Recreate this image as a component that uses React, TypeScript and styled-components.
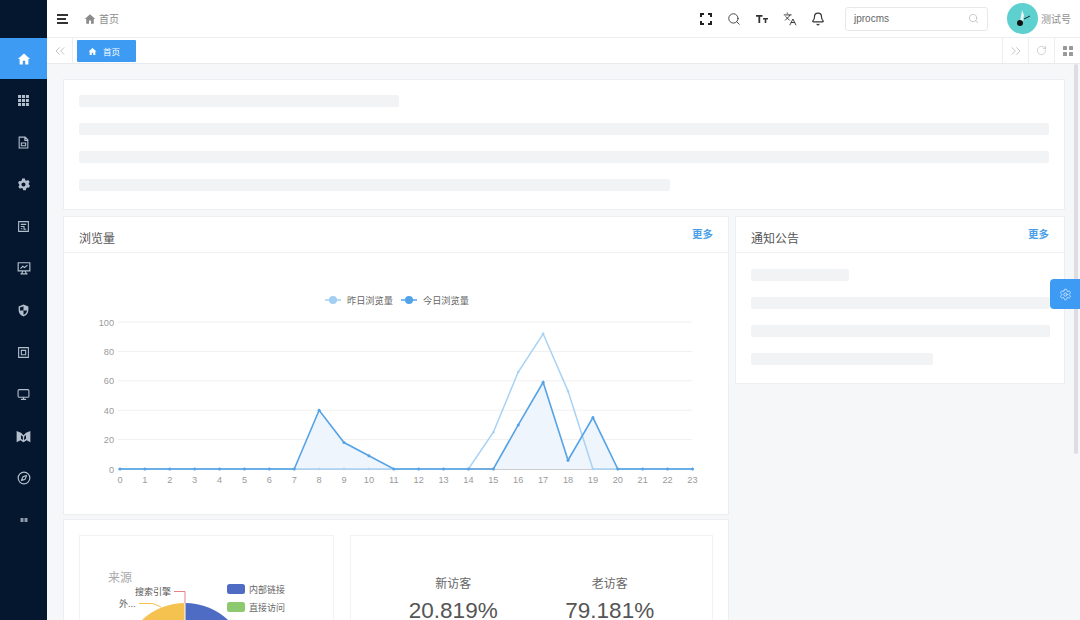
import styled, { createGlobalStyle } from 'styled-components';
import {
  Bell,
  ChevronsLeft,
  ChevronsRight,
  Compass,
  Languages,
  Monitor,
  RotateCw,
  Search,
  Settings,
} from 'lucide-react';

const GlobalStyle = createGlobalStyle`
  html, body {
    margin: 0;
    height: 100%;
    overflow: hidden;
    background: #f5f7f9;
    font-family: "Liberation Sans", "Noto Sans CJK SC", sans-serif;
  }
`;

const Page = styled.div`
  position: relative;
  display: flex;
  width: 1080px;
  height: 620px;
  overflow: hidden;
`;

const Sidebar = styled.nav`
  flex: 0 0 47px;
  padding-top: 38px;
  background: #04172e;
`;

const SideItem = styled.div<{ $active?: boolean; $dim?: boolean }>`
  display: flex;
  align-items: center;
  justify-content: center;
  height: ${(p) => (p.$active ? 41 : 42)}px;
  color: ${(p) => (p.$active ? '#fff' : p.$dim ? '#8f9bab' : '#b4bfcd')};
  background: ${(p) => (p.$active ? '#3e9bf4' : 'transparent')};
`;

const Main = styled.div`
  flex: 1;
  display: flex;
  flex-direction: column;
  min-width: 0;
`;

const Header = styled.header`
  flex: 0 0 38px;
  box-sizing: border-box;
  display: flex;
  align-items: center;
  padding: 0 9px 0 10px;
  background: #fff;
  border-bottom: 1px solid #eceef1;
`;

const Crumb = styled.div`
  display: flex;
  align-items: center;
  gap: 3px;
  margin-left: 16px;
  font-size: 10px;
  color: #8b8b8b;
`;

const HeadIcons = styled.div`
  display: flex;
  align-items: center;
  gap: 14px;
  margin-left: auto;
  color: #333;
`;

const SearchBox = styled.div`
  box-sizing: border-box;
  display: flex;
  align-items: center;
  justify-content: space-between;
  width: 143px;
  height: 24px;
  margin-left: 20px;
  padding: 0 8px;
  border: 1px solid #e6e8eb;
  border-radius: 3px;
  font-size: 10px;
  color: #666;
`;

const Avatar = styled.div`
  display: flex;
  align-items: center;
  justify-content: center;
  width: 31px;
  height: 31px;
  margin-left: 19px;
  border-radius: 50%;
  background: #5dd0cf;
`;

const UserName = styled.span`
  margin-left: 3px;
  font-size: 10px;
  color: #8f8f8f;
`;

const TabBar = styled.div`
  flex: 0 0 26px;
  box-sizing: border-box;
  display: flex;
  align-items: stretch;
  background: #fff;
  border-bottom: 1px solid #e8eaed;
`;

const TabButton = styled.div<{ $side: 'left' | 'right' }>`
  flex: 0 0 26px;
  box-sizing: border-box;
  display: flex;
  align-items: center;
  justify-content: center;
  color: #b5b5b5;
  ${(p) => (p.$side === 'left' ? 'border-right' : 'border-left')}: 1px solid #eceef1;
`;

const Tab = styled.div`
  display: flex;
  align-items: center;
  gap: 6px;
  width: 59px;
  height: 22px;
  box-sizing: border-box;
  margin: 2px auto 0 4px;
  padding-left: 11px;
  border-radius: 1px;
  background: #3e9bf4;
  color: #fff;
  font-size: 8.5px;
`;

const Content = styled.main`
  flex: 1;
  display: grid;
  grid-template-columns: 666px 330px;
  grid-template-rows: 131px 299px auto;
  column-gap: 6px;
  padding: 15px 15px 0 16px;
  overflow: hidden;
`;

const Card = styled.section`
  box-sizing: border-box;
  background: #fff;
  border: 1px solid #eceef2;
`;

const TopCard = styled(Card)`
  grid-column: 1 / 3;
  display: flex;
  flex-direction: column;
  gap: 16px;
  height: 131px;
  margin-bottom: 6px;
  padding: 15px;
`;

const Bar = styled.div<{ $width: string }>`
  width: ${(p) => p.$width};
  height: 12px;
  border-radius: 2px;
  background: #f2f3f5;
`;

const ChartCard = styled(Card)`
  height: 299px;
  margin-top: 6px;
`;

const NoticeCard = styled(Card)`
  height: 168px;
  margin-top: 6px;
`;

const CardHead = styled.div`
  box-sizing: border-box;
  display: flex;
  justify-content: space-between;
  height: 36px;
  padding: 0 15px;
  border-bottom: 1px solid #f0f1f4;
`;

const CardTitle = styled.span`
  padding-top: 14px;
  font-size: 12px;
  line-height: 17px;
  color: #555;
`;

const More = styled.a`
  padding-top: 10px;
  font-size: 10.5px;
  font-weight: 700;
  line-height: 15px;
  color: #4a9fe8;
`;

const NoticeBody = styled.div`
  display: flex;
  flex-direction: column;
  gap: 16px;
  padding: 16px 14px 0 15px;
`;

const Svg = styled.svg`
  display: block;
  font-family: "Liberation Sans", "Noto Sans CJK SC", sans-serif;
`;

const BottomCard = styled(Card)`
  grid-column: 1;
  display: grid;
  grid-template-columns: 255px 363px;
  column-gap: 16px;
  height: 130px;
  margin-top: 10px;
  padding: 15px 15px 0;
  border-bottom: 0;
`;

const Panel = styled.div`
  height: 100px;
  background: #fff;
  border: 1px solid #f1f2f5;
  box-sizing: border-box;
  overflow: hidden;
`;

const VisitorPanel = styled(Panel)`
  display: grid;
  grid-template-columns: 1fr 1fr;
  padding: 40px 24px 0;
  text-align: center;
`;

const VisitorLabel = styled.div`
  font-size: 12px;
  line-height: 17px;
  color: #666;
`;

const VisitorValue = styled.div`
  margin-top: 5px;
  font-size: 22.5px;
  line-height: 26px;
  color: #555;
`;

const FloatButton = styled.div`
  position: absolute;
  top: 279px;
  right: 0;
  display: flex;
  align-items: center;
  justify-content: center;
  width: 30px;
  height: 30px;
  border-radius: 4px 0 0 4px;
  background: #3e9bf4;
  color: #dcecff;
`;

const ScrollThumb = styled.div`
  position: absolute;
  top: 64px;
  right: 2px;
  width: 4px;
  height: 390px;
  border-radius: 2px;
  background: #dcdee2;
`;

function HomeIcon({ size = 12 }: { size?: number }): JSX.Element {
  return (
    <svg width={size} height={size} viewBox="0 0 24 24" fill="currentColor">
      <path d="M12 2.5 1.5 12h3v9.5h5.5V15h4v6.5h5.5V12h3z" />
    </svg>
  );
}

function Glyph({ d, fill, size = 13 }: { d: string; fill?: boolean; size?: number }): JSX.Element {
  return (
    <svg
      width={size}
      height={size}
      viewBox="0 0 24 24"
      fill={fill ? 'currentColor' : 'none'}
      stroke={fill ? 'none' : 'currentColor'}
      strokeWidth="2"
      fillRule="evenodd"
    >
      <path d={d} />
    </svg>
  );
}

const sideIcons = [
  <Glyph fill d="M2 2h5.5v5.5H2zM9.2 2h5.6v5.5H9.2zM16.5 2H22v5.500h-5.5zM2 9.200h5.500v5.600H2zM9.200 9.200h5.600v5.600H9.200zM16.500 9.200H22v5.600h-5.500zM2 16.500h5.500V22H2zM9.200 16.500h5.600V22H9.200zM16.500 16.500H22V22h-5.500z" />,
  <Glyph d="M4 2h11l5 5v15H4zM14.500 2.500V8H20M8 13h8v5H8z" />,
  <Glyph fill d="M9.500 1h5l.7 3 2.600 1.100 2.700-1.500 3 3.600-1.900 2.400.4 2.800 2 1.600-2 4-3-.6-2 2-.6 3h-5l-.7-3-2.600-1.100-2.700 1.500-3-3.600 1.900-2.400-.4-2.800-2-1.600 2-4 3 .6 2-2zM12 8.200a3.800 3.800 0 1 0 0 7.600 3.800 3.800 0 0 0 0-7.600z" />,
  <Glyph d="M3 3h18v18H3zM7 8h10M7 12h6v5h4M7 16h3" />,
  <Glyph size={14} d="M2 3h20v14H2zM8 22l2-5M16 22l-2-5M6 22h12M6 13l4-4 3 2 5-4" />,
  <Glyph fill d="M12 1 3 4.500v7C3 17 7 21.500 12 23c5-1.500 9-6 9-11.500v-7zM12 4v8H5.500v-.5-5zM12 12h6.500c-.5 3.700-3 6.800-6.500 8z" />,
  <Glyph d="M3 3h18v18H3zM8 8h8v8H8z" />,
  <Monitor size={13} />,
  <Glyph fill size={15} d="M1 3l7 3 4 4 4-4 7-3v18l-6-3-5 3-5-3-6 3zM11 12.500l-3-3v6l3 2zM13 12.500v5l3-2v-6z" />,
  <Compass size={14} />,
  <Glyph fill size={12} d="M5 8h6v8H5zM13 8h6v8h-6z" />,
];

const toX = (i: number) => 120 + i * 24.89;
const toY = (v: number) => 469 - v * 1.47;
const hours = Array.from({ length: 24 }, (_, i) => i);
const yesterday = hours.map((h) => ({ 15: 25, 16: 66, 17: 92, 18: 53 } as Record<number, number>)[h] ?? 0);
const today = hours.map((h) => ({ 8: 40, 9: 18, 10: 9, 16: 30, 17: 59, 18: 6, 19: 35 } as Record<number, number>)[h] ?? 0);
const linePoints = (data: number[]) => data.map((v, i) => `${toX(i)},${toY(v)}`).join(' ');

function VisitChart(): JSX.Element {
  return (
    <Svg width="664" height="262" viewBox="64 253 664 262">
      <g fontSize="9.2" fill="#666">
        <line x1="325" x2="341" y1="300" y2="300" stroke="#a3cff3" strokeWidth="1.500" />
        <circle cx="333" cy="300" r="4" fill="#a3cff3" />
        <text x="347" y="303.500">昨日浏览量</text>
        <line x1="401" x2="417" y1="300" y2="300" stroke="#52a2e8" strokeWidth="1.500" />
        <circle cx="409" cy="300" r="4" fill="#52a2e8" />
        <text x="423" y="303.500">今日浏览量</text>
      </g>
      {[0, 20, 40, 60, 80, 100].map((v) => (
        <g key={v}>
          {v > 0 && <line x1="118" x2="692" y1={toY(v)} y2={toY(v)} stroke="#f0f0f0" />}
          <text x="114" y={toY(v) + 3.500} textAnchor="end" fontSize="9.200" fill="#9a9a9a">
            {v}
          </text>
        </g>
      ))}
      <line x1="118" x2="692" y1="469" y2="469" stroke="#999" />
      {hours.map((h) => (
        <text key={h} x={toX(h)} y="482.500" textAnchor="middle" fontSize="9.200" fill="#9a9a9a">
          {h}
        </text>
      ))}
      <polygon points={`${toX(0)},469 ${linePoints(today)} ${toX(23)},469`} fill="#eef5fc" />
      <polyline points={linePoints(yesterday)} fill="none" stroke="#a8d2f4" strokeWidth="1.500" />
      {yesterday.map((v, i) => (
        <circle key={i} cx={toX(i)} cy={toY(v)} r="1.300" fill="#a8d2f4" />
      ))}
      <polyline points={linePoints(today)} fill="none" stroke="#55a3e6" strokeWidth="1.600" />
      {today.map((v, i) => (
        <circle key={i} cx={toX(i)} cy={toY(v)} r="1.500" fill="#55a3e6" />
      ))}
    </Svg>
  );
}

function SourcePie(): JSX.Element {
  return (
    <Svg width="253" height="98" viewBox="80 536 253 98">
      <text x="108" y="582" fontSize="12" fill="#aaa">来源</text>
      <path d="M185 666V603A63 63 0 0 1 248 666z" fill="#4f6cc4" />
      <path d="M185 666V603A63 63 0 0 0 122 666z" fill="#f6c24f" />
      <line x1="185" x2="185" y1="603" y2="666" stroke="#fff" />
      <path d="M174 591.500h11V603" fill="none" stroke="#e8808a" />
      <path d="M139 603.500h14l8 3.500" fill="none" stroke="#f6c24f" />
      <text x="135" y="595" fontSize="9" fill="#555">搜索引擎</text>
      <text x="119" y="607" fontSize="9" fill="#555">外...</text>
      <rect x="227" y="584" width="18" height="10" rx="2.500" fill="#4f6cc4" />
      <text x="249" y="592.500" fontSize="9" fill="#666">内部链接</text>
      <rect x="227" y="602" width="18" height="10" rx="2.500" fill="#8cc96f" />
      <text x="249" y="610.500" fontSize="9" fill="#666">直接访问</text>
    </Svg>
  );
}

function App(): JSX.Element {
  return (
    <Page>
      <GlobalStyle />
      <Sidebar>
        <SideItem $active>
          <HomeIcon size={14} />
        </SideItem>
        {sideIcons.map((icon, i) => (
          <SideItem key={i} $dim={i === 10}>
            {icon}
          </SideItem>
        ))}
      </Sidebar>
      <Main>
        <Header>
          <svg width="11" height="10" viewBox="0 0 11 10" fill="#333">
            <rect width="11" height="2" />
            <rect y="4" width="9" height="2" />
            <rect y="8" width="11" height="2" />
          </svg>
          <Crumb>
            <HomeIcon size={12} />
            首页
          </Crumb>
          <HeadIcons>
            <svg width="14" height="14" viewBox="0 0 14 14" fill="none" stroke="#222" strokeWidth="2">
              <path d="M2 5V2h3M9 2h3v3M12 9v3H9M5 12H2V9" />
            </svg>
            <Search size={14} strokeWidth={1.500} />
            <svg width="14" height="14" viewBox="0 0 14 14" fill="#333">
              <path d="M1 3h6.500v1.800H5.200V11H3.400V4.800H1zM8 6h5v1.500h-1.700V11H9.700V7.500H8z" />
            </svg>
            <Languages size={14} strokeWidth={1.600} />
            <Bell size={14} strokeWidth={2} />
          </HeadIcons>
          <SearchBox>
            jprocms
            <Search size={11} color="#c4c6ca" />
          </SearchBox>
          <Avatar>
            <svg width="18" height="20" viewBox="0 0 18 20">
              <path d="M8 1l2 5-1 6-3 1 1-6z" fill="#eaf6f5" />
              <circle cx="6" cy="14" r="3" fill="#111" />
              <path d="M10 10l6-3" stroke="#222" strokeWidth="1" />
            </svg>
          </Avatar>
          <UserName>测试号</UserName>
        </Header>
        <TabBar>
          <TabButton $side="left">
            <ChevronsLeft size={16} strokeWidth={1.200} />
          </TabButton>
          <Tab>
            <HomeIcon size={9} />
            首页
          </Tab>
          <TabButton $side="right">
            <ChevronsRight size={16} strokeWidth={1.200} />
          </TabButton>
          <TabButton $side="right">
            <RotateCw size={11} strokeWidth={1.300} />
          </TabButton>
          <TabButton $side="right">
            <svg width="10" height="10" viewBox="0 0 10 10" fill="#999">
              <rect width="4" height="4" rx="0.500" />
              <rect x="6" width="4" height="4" rx="0.500" />
              <rect y="6" width="4" height="4" rx="0.500" />
              <rect x="6" y="6" width="4" height="4" rx="0.500" />
            </svg>
          </TabButton>
        </TabBar>
        <Content>
          <TopCard>
            <Bar $width="320px" />
            <Bar $width="100%" />
            <Bar $width="100%" />
            <Bar $width="591px" />
          </TopCard>
          <ChartCard>
            <CardHead>
              <CardTitle>浏览量</CardTitle>
              <More>更多</More>
            </CardHead>
            <VisitChart />
          </ChartCard>
          <NoticeCard>
            <CardHead>
              <CardTitle>通知公告</CardTitle>
              <More>更多</More>
            </CardHead>
            <NoticeBody>
              <Bar $width="98px" />
              <Bar $width="100%" />
              <Bar $width="100%" />
              <Bar $width="182px" />
            </NoticeBody>
          </NoticeCard>
          <BottomCard>
            <Panel>
              <SourcePie />
            </Panel>
            <VisitorPanel>
              <div>
                <VisitorLabel>新访客</VisitorLabel>
                <VisitorValue>20.819%</VisitorValue>
              </div>
              <div>
                <VisitorLabel>老访客</VisitorLabel>
                <VisitorValue>79.181%</VisitorValue>
              </div>
            </VisitorPanel>
          </BottomCard>
        </Content>
      </Main>
      <ScrollThumb />
      <FloatButton>
        <Settings size={13} strokeWidth={1.500} />
      </FloatButton>
    </Page>
  );
}

export default App;
